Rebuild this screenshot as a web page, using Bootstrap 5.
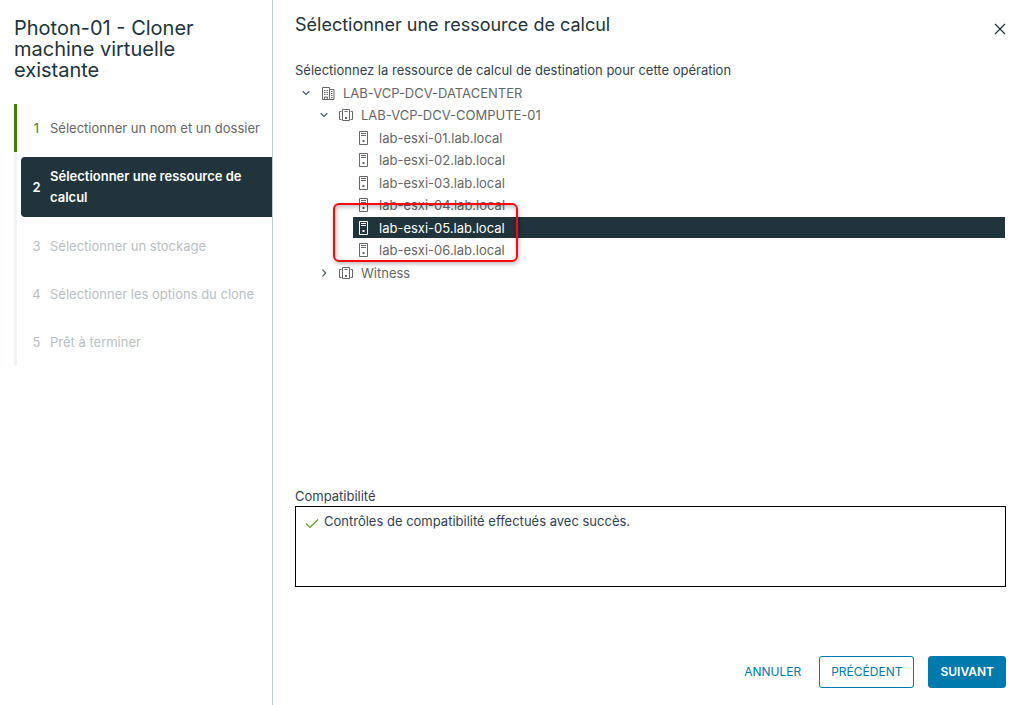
<!DOCTYPE html>
<html lang="fr">
<head>
<meta charset="utf-8">
<meta name="viewport" content="width=device-width, initial-scale=1">
<title>Photon-01 - Cloner machine virtuelle existante</title>
<link href="https://cdn.jsdelivr.net/npm/bootstrap@5.3.0/dist/css/bootstrap.min.css" rel="stylesheet">
<script src="https://cdn.jsdelivr.net/npm/bootstrap@5.3.0/dist/js/bootstrap.bundle.min.js" defer></script>
<style>
  body { font: 13px/20px Metropolis, Inter, sans-serif; color: #314351; background: #fff; }
  .wizard-side { width: 273px; padding: 18px 0 0 14px; border-right: 1px solid #c1cdd4; }
  .wizard-title { font-size: 20px; line-height: 21px; font-weight: 400; color: #21333b; margin: 0 40px 23px 0; }
  .step { border-left: 3px solid #eff4f7; padding-left: 4px; }
  .step-done { border-left-color: #3c8500; }
  .step-link { width: 100%; min-height: 48px; padding: 0 12px 0 11px; gap: 9px; border: 0; background: none; color: #666; text-align: left; }
  .step-link:disabled { color: #b9c0c4; }
  .step-num { width: 9px; text-align: center; flex: none; }
  .step-current { padding-top: 5px; padding-bottom: 5px; }
  .step-current .step-link { min-height: 60px; line-height: 21px; background: #21333b; color: #fff; font-weight: 600; border-radius: 4px 0 0 4px; }
  .wizard-main { padding: 14px 17px 17px 22px; }
  .page-title { font-size: 18px; line-height: 22px; font-weight: 400; color: #21333b; margin: 0; }
  .close-btn { border: 0; background: none; padding: 9px 0 0; line-height: 0; color: #21333b; }
  .tree { height: 201px; margin: 2px 1px 0 0; padding: 0; }
  .tree li { height: 21px; color: #666; }
  .level-2 { padding-left: 18px; }
  .level-3 { padding-left: 36px; }
  .caret { width: 22px; height: 21px; padding: 0; border: 0; background: none; color: #45596a; line-height: 0; }
  .node { height: 21px; padding-left: 4px; color: #666; gap: 8px; }
  .level-3 .node { margin-left: 22px; }
  .node.selected { background: #21333b; color: #fff; }
  .tree svg { flex: none; }
  .callout { left: 38px; top: 123px; width: 185px; height: 59px; border: 2px solid #f90a0e; border-radius: 6px; box-shadow: 1px 2px 4px #0004, inset 1px 2px 5px #0004; pointer-events: none; }
  .compat-title { font-size: 13px; line-height: 20px; font-weight: 400; margin: 0; }
  .compat-box { min-height: 81px; border: 1px solid #000; padding: 4px 9px; gap: 5px; }
  .wizard-actions { padding-top: 69px; }
  .action-btn { height: 32px; padding: 0 11px; font-size: 12px; line-height: 20px; border: 1px solid #0079ad; border-radius: 3px; color: #0079ad; background: #fff; }
  .action-plain { border-color: transparent; margin-right: 6px; }
  .action-main { background: #0079ad; color: #fff; font-weight: 600; margin-left: 14px; }
</style>
</head>
<body>
<svg class="d-none" aria-hidden="true">
  <symbol id="datacenter" viewBox="0 0 14 14"><path d="M1.5 13.5v-12h7v12zM8.5 3.500h4.500v10h-4.500M3 4.500h1.500m1 0H7M3 6.500h1.500m1 0H7M3 8.500h1.500m1 0H7M10 5.500h1.500M10 7.500h1.500M10 9.500h1.500M10 11.500h1.500M3.500 13v-2h3v2" fill="none" stroke="currentColor"/></symbol>
  <symbol id="cluster" viewBox="0 0 14 14"><path d="M3.500 12.500v-11h7v11zM2.500 3.500h-2v8h2M11.500 3.500h2v8h-2M5.500 3.500h3" fill="none" stroke="currentColor"/><path d="M6 9h2v2H6z" fill="currentColor"/></symbol>
  <symbol id="host" viewBox="0 0 14 14"><path d="M2.500.500h8v13h-8zM4 2.500h5M4 4.500h5" fill="none" stroke="currentColor"/><path d="M5.500 9h2v2h-2z" fill="currentColor"/></symbol>
  <symbol id="down" viewBox="0 0 8 8"><path d="M.7 2.300 4 5.500 7.300 2.300" fill="none" stroke="currentColor" stroke-width="1.200"/></symbol>
  <symbol id="right" viewBox="0 0 8 8"><path d="M2.500.700 5.700 4 2.500 7.300" fill="none" stroke="currentColor" stroke-width="1.200"/></symbol>
</svg>
<div class="d-flex min-vh-100">
  <aside class="wizard-side flex-shrink-0">
    <h1 class="wizard-title">Photon-01 - Cloner machine virtuelle existante</h1>
    <ol class="list-unstyled m-0">
      <li class="step step-done"><button class="step-link d-flex align-items-center" type="button"><span class="step-num">1</span><span class="text-nowrap">Sélectionner un nom et un dossier</span></button></li>
      <li class="step step-current" aria-current="step"><button class="step-link d-flex align-items-center" type="button"><span class="step-num">2</span><span>Sélectionner une ressource de calcul</span></button></li>
      <li class="step"><button class="step-link d-flex align-items-center" type="button" disabled><span class="step-num">3</span><span>Sélectionner un stockage</span></button></li>
      <li class="step"><button class="step-link d-flex align-items-center" type="button" disabled><span class="step-num">4</span><span>Sélectionner les options du clone</span></button></li>
      <li class="step"><button class="step-link d-flex align-items-center" type="button" disabled><span class="step-num">5</span><span>Prêt à terminer</span></button></li>
    </ol>
  </aside>
  <main class="wizard-main flex-grow-1 d-flex flex-column">
    <header class="d-flex justify-content-between align-items-start mb-4">
      <h2 class="page-title">Sélectionner une ressource de calcul</h2>
      <button class="close-btn" type="button" aria-label="Fermer"><svg width="12" height="12" viewBox="0 0 12 12"><path d="M1 1l10 10M11 1 1 11" stroke="currentColor" stroke-width="1.200"/></svg></button>
    </header>
    <p class="m-0">Sélectionnez la ressource de calcul de destination pour cette opération</p>
    <div class="position-relative">
      <ul class="tree list-unstyled d-flex flex-column justify-content-between" role="tree">
        <li class="d-flex" role="treeitem" aria-level="1" aria-expanded="true"><button class="caret" type="button" aria-label="Réduire"><svg width="8" height="8"><use href="#down"/></svg></button><a href="#" class="node d-flex align-items-center flex-grow-1 text-decoration-none"><svg width="14" height="14"><use href="#datacenter"/></svg>LAB-VCP-DCV-DATACENTER</a></li>
        <li class="level-2 d-flex" role="treeitem" aria-level="2" aria-expanded="true"><button class="caret" type="button" aria-label="Réduire"><svg width="8" height="8"><use href="#down"/></svg></button><a href="#" class="node d-flex align-items-center flex-grow-1 text-decoration-none"><svg width="14" height="14"><use href="#cluster"/></svg>LAB-VCP-DCV-COMPUTE-01</a></li>
        <li class="level-3 d-flex" role="treeitem" aria-level="3"><a href="#" class="node d-flex align-items-center flex-grow-1 text-decoration-none"><svg width="14" height="14"><use href="#host"/></svg>lab-esxi-01.lab.local</a></li>
        <li class="level-3 d-flex" role="treeitem" aria-level="3"><a href="#" class="node d-flex align-items-center flex-grow-1 text-decoration-none"><svg width="14" height="14"><use href="#host"/></svg>lab-esxi-02.lab.local</a></li>
        <li class="level-3 d-flex" role="treeitem" aria-level="3"><a href="#" class="node d-flex align-items-center flex-grow-1 text-decoration-none"><svg width="14" height="14"><use href="#host"/></svg>lab-esxi-03.lab.local</a></li>
        <li class="level-3 d-flex" role="treeitem" aria-level="3"><a href="#" class="node d-flex align-items-center flex-grow-1 text-decoration-none"><svg width="14" height="14"><use href="#host"/></svg>lab-esxi-04.lab.local</a></li>
        <li class="level-3 d-flex" role="treeitem" aria-level="3" aria-selected="true"><a href="#" class="node selected d-flex align-items-center flex-grow-1 text-decoration-none"><svg width="14" height="14"><use href="#host"/></svg>lab-esxi-05.lab.local</a></li>
        <li class="level-3 d-flex" role="treeitem" aria-level="3"><a href="#" class="node d-flex align-items-center flex-grow-1 text-decoration-none"><svg width="14" height="14"><use href="#host"/></svg>lab-esxi-06.lab.local</a></li>
        <li class="level-2 d-flex" role="treeitem" aria-level="2" aria-expanded="false"><button class="caret" type="button" aria-label="Développer"><svg width="8" height="8"><use href="#right"/></svg></button><a href="#" class="node d-flex align-items-center flex-grow-1 text-decoration-none"><svg width="14" height="14"><use href="#cluster"/></svg>Witness</a></li>
      </ul>
      <div class="callout position-absolute"></div>
    </div>
    <section class="mt-auto" aria-labelledby="compat-title">
      <h3 id="compat-title" class="compat-title">Compatibilité</h3>
      <div class="compat-box d-flex align-items-start"><svg class="mt-1" width="14" height="16" viewBox="0 0 14 16"><path d="M1 8.500 5 12.500 13 4.500" fill="none" stroke="#5aa220" stroke-width="1.200"/></svg><span>Contrôles de compatibilité effectués avec succès.</span></div>
    </section>
    <footer class="wizard-actions d-flex justify-content-end">
      <button class="action-btn action-plain" type="button">ANNULER</button>
      <button class="action-btn" type="button">PRÉCÉDENT</button>
      <button class="action-btn action-main" type="button">SUIVANT</button>
    </footer>
  </main>
</div>
</body>
</html>
